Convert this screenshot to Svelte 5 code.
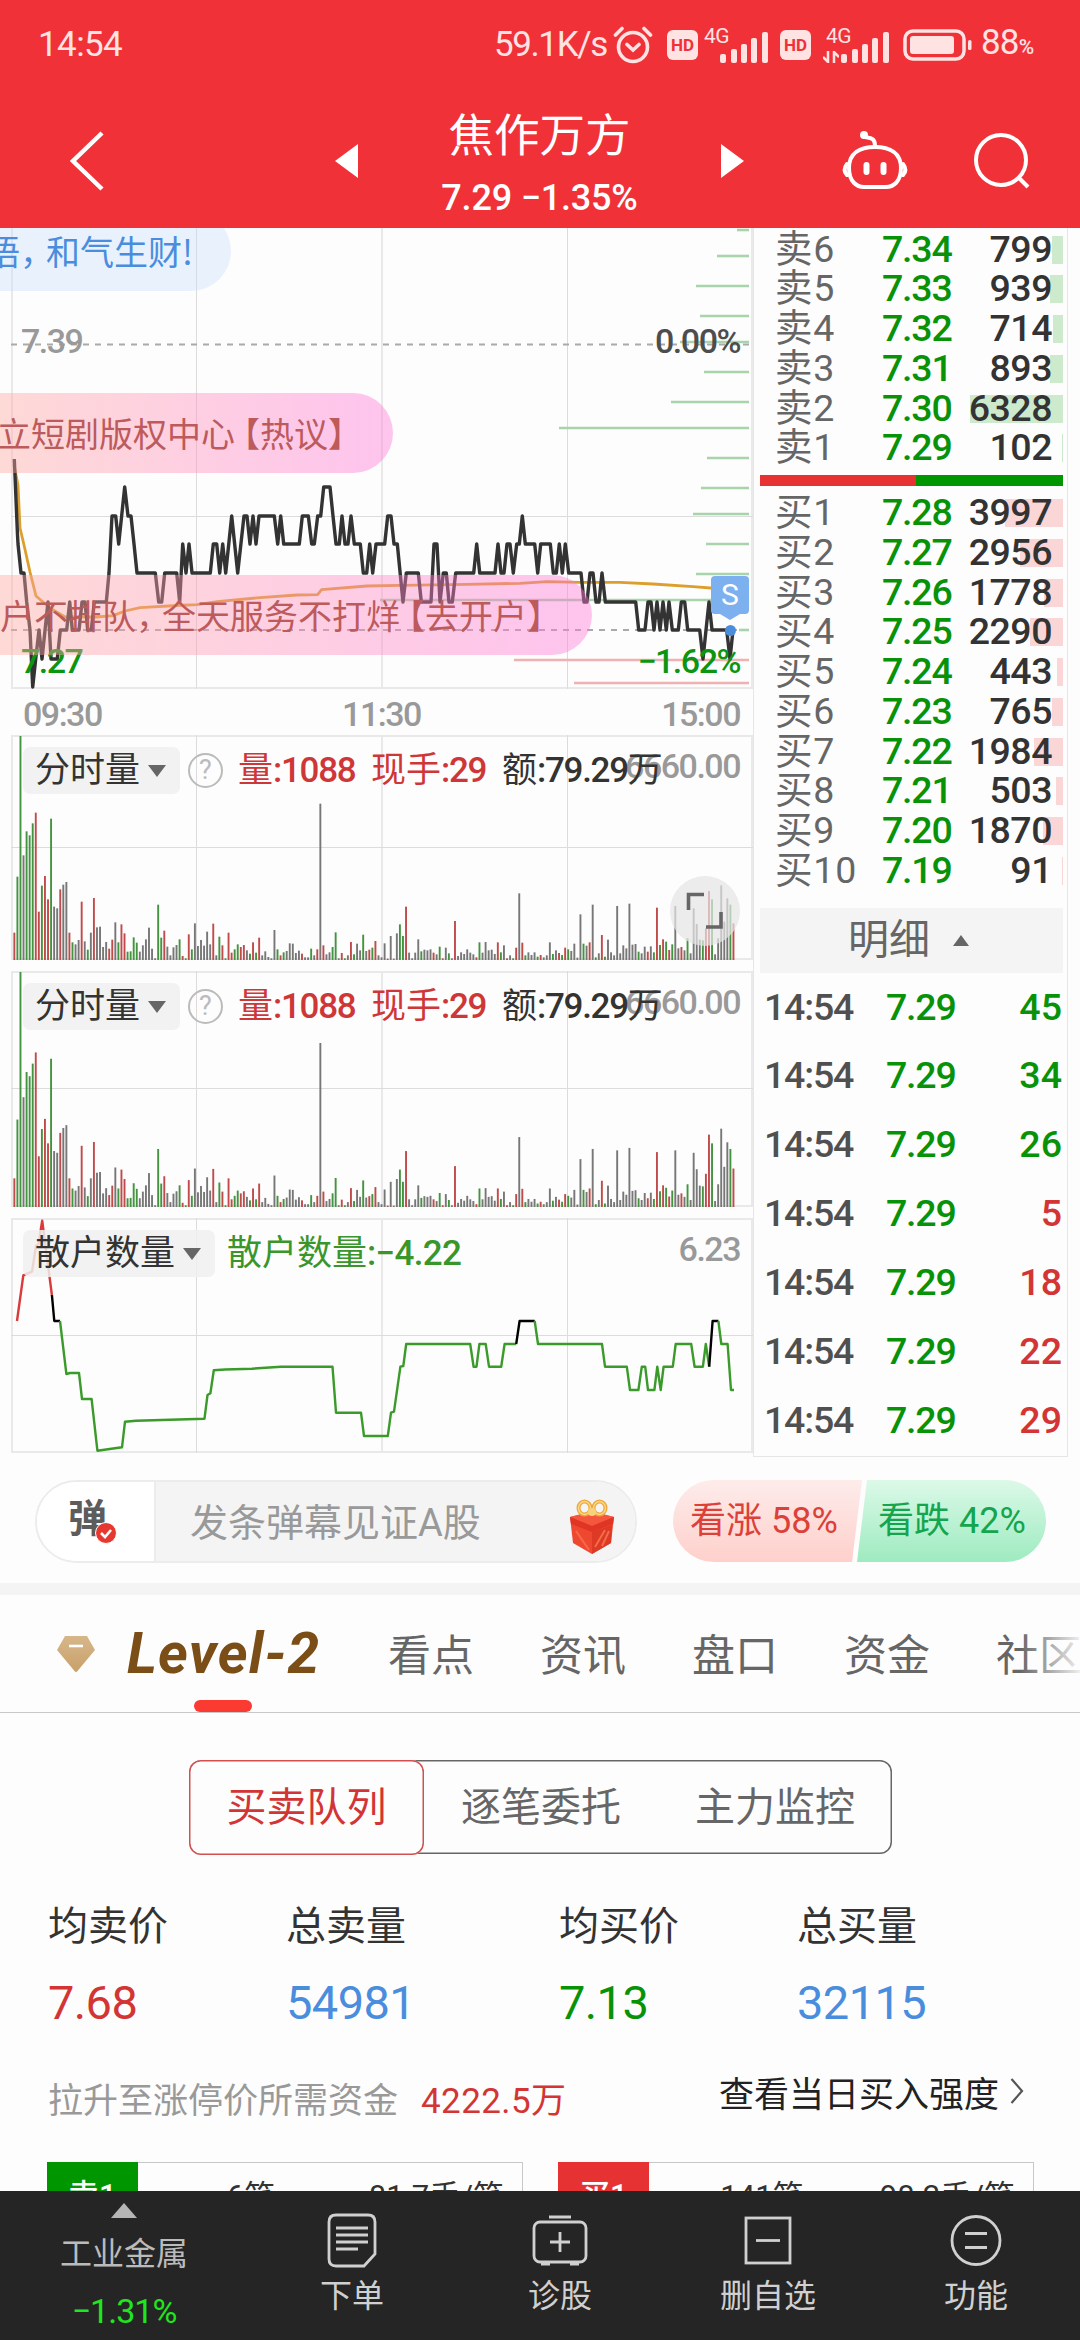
<script>
  const asks = [
    ['卖6', '7.34', 799, 11], ['卖5', '7.33', 939, 13], ['卖4', '7.32', 714, 10],
    ['卖3', '7.31', 893, 13], ['卖2', '7.30', 6328, 93], ['卖1', '7.29', 102, 1]
  ];
  const bids = [
    ['买1', '7.28', 3997, 58], ['买2', '7.27', 2956, 43], ['买3', '7.26', 1778, 19],
    ['买4', '7.25', 2290, 33], ['买5', '7.24', 443, 6], ['买6', '7.23', 765, 11],
    ['买7', '7.22', 1984, 29], ['买8', '7.21', 503, 7], ['买9', '7.20', 1870, 20], ['买10', '7.19', 91, 1]
  ];
  const ticks = [[45, 'g'], [34, 'g'], [26, 'g'], [5, 'r'], [18, 'r'], [22, 'r'], [29, 'r']];

  // Price trace in thirds of a pixel: x, then price level (0 = 7.34, each step is one cent down)
  const levels = [487, 516, 544, 573, 602, 630, 659, 687];
  const trace = '45,2 54,2 63,3 72,3 80,4 90,5 98,7 107,6 117,5 126,6 144,4 153,6 172,6 181,5 200,5 209,4 217,5 237,5 246,4 255,4 263,5 274,5 283,4 319,4 327,3 336,1 347,1 356,2 374,0 384,1 393,1 402,2 411,3 466,3 476,4 485,4 494,3 530,3 539,4 548,2 558,3 567,2 576,3 631,3 640,2 650,2 659,3 668,2 677,3 695,1 713,3 732,1 741,1 750,2 759,1 768,2 777,1 823,1 833,2 842,1 851,2 898,2 907,1 925,1 935,2 943,2 953,1 962,1 971,0 990,0 999,1 1008,2 1018,2 1026,1 1035,2 1044,2 1053,1 1063,2 1081,2 1090,3 1100,3 1109,2 1118,3 1128,2 1154,2 1163,1 1173,1 1182,2 1192,2 1209,4 1219,3 1255,3 1264,4 1293,4 1302,2 1311,2 1320,4 1330,3 1339,3 1347,4 1357,4 1367,3 1421,3 1430,2 1439,3 1485,3 1494,2 1503,3 1512,3 1521,2 1530,2 1540,3 1550,2 1558,2 1567,1 1576,2 1604,2 1613,3 1622,2 1651,2 1660,3 1669,3 1678,2 1687,3 1696,2 1706,3 1743,3 1752,4 1761,4 1770,3 1779,3 1788,4 1797,4 1806,3 1816,4 1907,4 1916,5 1935,5 1944,4 1953,4 1962,5 1971,4 1980,5 1989,4 1999,5 2007,4 2017,5 2035,5 2044,4 2054,4 2063,5 2099,5 2109,6 2118,5 2127,4 2136,5 2180,5 2190,6 2199,5';
  const pricePoints = '14.3,459 17.5,535 ' + trace.split(' ').slice(1).map((p) => {
    const [x, l] = p.split(',').map(Number);
    return `${(x / 3).toFixed(1)},${levels[l]}`;
  }).join(' ');
  const avgPoints = '14,465 18,485 20,528 24,545 30,572 36,596 50,608 65,617 97,617 113,615.6 125,611 140,607.6 177,605.5 197,604.6 217,601.6 260,597.6 297,595 317.6,594.6 321.6,589.6 367,586 400,585.3 467,584.3 520,583.3 547,581.6 580,582.3 620,582.3 653,584 693,586.6 717,588.5 733,590';

  const askDepth = [[230, 737], [256, 717], [286, 696], [316, 700], [342, 680], [372, 704], [402, 671], [428, 559], [458, 707], [488, 701], [514, 693], [544, 706], [574, 696], [600, 380], [630, 739]];
  const bidDepth = [[660, 514], [683, 574]];

  // One bar per minute: colour letter and height
  const volume = 'r82 g250 g672 k314 g386 g374 g410 r442 r145 g223 r252 r182 g424 k160 k155 r212 k226 k234 r82 g53 k47 k60 r175 k56 g31 k82 r186 k98 k100 k39 k54 r34 r61 k113 g53 r107 r80 g25 g26 g68 g52 k25 k44 k62 k97 k34 k5 g166 g67 r88 k40 k14 k38 k45 g62 r12 g5 r77 g32 k110 k42 k60 k43 k85 k47 r109 k14 g70 r44 g5 r82 r22 g32 g47 r39 r45 k29 g19 r53 g22 r67 k14 k26 k9 k5 k90 g32 r14 g23 k27 k50 k49 k21 k28 r19 k8 k8 g34 k14 r32 k469 r44 k17 k23 g39 g83 k5 r21 g5 k14 r54 g17 k49 k29 g76 k27 r31 g37 r57 k14 k8 k50 r4 k72 k4 k80 g107 g72 r160 k22 k5 k22 k62 g26 k31 k29 k32 r22 k17 g40 r5 k37 g20 k5 r117 k12 k23 k18 k32 k22 k17 r8 g53 k22 k54 k29 k31 k18 r53 g23 k44 r5 k14 g5 r37 k200 r52 g14 k23 k15 k23 g10 r15 k8 k14 k53 g18 k29 r21 g15 r37 g32 k27 k49 k7 k137 g49 k43 r53 k166 g8 k20 r75 g10 k61 k23 k14 k162 k20 k44 k35 k169 k46 k48 g25 k20 k40 r25 k41 g23 r157 g45 r62 g55 r30 g47 k162 k35 r39 k29 g65 k20 k155 k108 k61 g59 r95 r207 g182 k17 k65 k224 k115 k185 g166 r110';
  const bars = volume.split(' ').map((t, i) => ({ c: t[0], x: 13.4 + i * 3.06, h: Number(t.slice(1)) / 672 }));

  const volPanels = [{ h: 226, mid: 112, plot: 224, button: true }, { h: 237, mid: 117, plot: 235, button: false }];
  const retail = [
    ['#d93a3a', '17,103 23.3,57.3 32,53.7 36,28 38.5,26 42.2,2.7 51.9,77'],
    ['#000', '51.9,77 54.3,103 60,103'],
    ['#3a9a2a', '60,103 66.4,156 70,155 79,155 82,181 91.6,181 97.4,232.7 122,229.3 125,203.7 136,202.7 204.5,200.7 207.5,177 210.4,175.3 213.8,152.3 225,151.5 252,150.7 281,148.7 332.5,148.7 336,194.7 361,194.7 364,218 387.8,218 391,194.7 394,193.7 400.4,148.7 403.3,148 406.2,126 470.2,126 473.6,148.7 476.5,148.7 479.4,126 485.7,126 489,148.7 501.2,148.7 504.6,126 516.2,126'],
    ['#000', '516.2,126 519.6,103 534.7,103'],
    ['#3a9a2a', '534.7,103 538,126 602,126 605,148.7 626.8,148.7 630,172 638.4,172 641.8,148.7 645.2,148.7 648,172 654.4,172 657.3,148.7 660.7,172 663.6,148.7 672.8,148.7 675.7,126 691.2,126 694.6,148.7 702.9,148.7 705.8,126 709.2,148.7'],
    ['#000', '709.2,148.7 712.6,103 718.4,103'],
    ['#3a9a2a', '718.4,103 721.3,126 727.6,126 731,172 734,172']
  ];
  const stats = [['均卖价', '7.68', 'rise'], ['总卖量', '54981', 'total'], ['均买价', '7.13', 'fall'], ['总买量', '32115', 'total']];
</script>

{#snippet grid(h, mid)}
  <g fill="none" stroke="#e9e9e9" stroke-width="2">
    <path d="M12 0V{h}M382 0V{h}M752 0V{h}" />
    <path d="M11 {h - 1}H753" />
    <path stroke="#dcdcdc" stroke-width="1" d="M196.5 0V{h}M567.5 0V{h}M11 {mid + 0.5}H753" />
  </g>
{/snippet}

{#snippet signal()}
  <svg class="signal" viewBox="0 0 48 31" width="48" height="31" fill="#ffe3e3">
    <rect x="0" y="22" width="6" height="9" rx="2" /><rect x="11" y="17" width="6" height="14" rx="2" />
    <rect x="21" y="12" width="6" height="19" rx="2" /><rect x="31" y="6" width="6" height="25" rx="2" />
    <rect x="42" y="0" width="6" height="31" rx="2" />
  </svg>
{/snippet}

<div class="screen">
  <header>
    <div class="status">
      <span class="clock">14:54</span>
      <span class="speed">59.1K/s</span>
      <svg class="alarm" viewBox="0 0 40 38" width="40" height="38" fill="none" stroke="#ffe3e3" stroke-width="3.6" stroke-linecap="round">
        <circle cx="20" cy="21" r="14.5" /><path d="M2.5 9L9 2.5M37.5 9L31 2.5M14 18.5L20 24L26 18.5" />
      </svg>
      <span class="hd">HD</span>
      <span class="net"><i>4G</i>{@render signal()}</span>
      <span class="hd second">HD</span>
      <span class="net wide"><i>4G</i>
        <svg class="updown" viewBox="0 0 16 12" width="16" height="12" fill="none" stroke="#ffe3e3" stroke-width="2.5"><path d="M5 0V11L0 6M11 12V1L16 6" /></svg>
        {@render signal()}</span>
      <svg class="battery" viewBox="0 0 70 32" width="70" height="32">
        <rect x="2" y="2" width="59" height="28" rx="8" fill="none" stroke="#ffe3e3" stroke-width="3.5" />
        <rect x="7" y="7" width="44" height="18" rx="3" fill="#ffe3e3" /><rect x="65" y="11" width="3.5" height="10" rx="1.5" fill="#ffe3e3" />
      </svg>
      <span class="level">88<small>%</small></span>
    </div>
    <div class="nav">
      <svg class="back" viewBox="0 0 36 60" width="36" height="60" fill="none" stroke="#fff" stroke-width="4.5"><path d="M33 2L4 30L33 58" /></svg>
      <svg class="prev" viewBox="0 0 23 34" width="23" height="34" fill="#fff"><path d="M23 0V34L0 17z" /></svg>
      <div class="title"><h1>焦作万方</h1><p>7.29 −1.35%</p></div>
      <svg class="next" viewBox="0 0 23 34" width="23" height="34" fill="#fff"><path d="M0 0V34L23 17z" /></svg>
      <svg class="bot" viewBox="0 0 66 62" width="66" height="62" fill="none" stroke="#fff" stroke-width="4" stroke-linecap="round">
        <path d="M33 17C18 17 7 23 7 38C7 52 15 57 22 57H44C51 57 59 52 59 38C59 23 48 17 33 17z" />
        <path d="M33 16C33 8 29 8 23 7M5 34C2 38 2 42 5 45M61 34C64 38 64 42 61 45" /><circle cx="22" cy="5" r="2" fill="#fff" />
        <path stroke-width="6" d="M24.5 35V42M41.5 35V42" />
      </svg>
      <svg class="search" viewBox="0 0 58 58" width="58" height="58" fill="none" stroke="#fff" stroke-width="4"><circle cx="28" cy="28" r="25" /><path d="M45 45L55 55" /></svg>
    </div>
  </header>

  <section class="market">
    <div class="charts">
      <div class="price">
        <svg viewBox="0 228 753 462" width="753" height="462" fill="none">
          <g stroke="#e9e9e9" stroke-width="2"><path d="M12 228V689M382 228V689M752 228V689M11 688H753" />
            <path stroke="#dcdcdc" stroke-width="1" d="M196.5 228V689M567.5 228V689M11 516.5H753" /></g>
          <path stroke="#aaa" stroke-width="2" stroke-dasharray="6 6" d="M11 344.5H749M11 630H749" />
          <g stroke="#a9d3ab" stroke-width="2.6">{#each askDepth as [y, x]}<path d="M{x} {y}H749" />{/each}</g>
          <g stroke="#efb1b1" stroke-width="2.6">{#each bidDepth as [y, x]}<path d="M{x} {y}H749" />{/each}</g>
          <polyline points={avgPoints} stroke="#dc9f2c" stroke-width="2.8" stroke-linejoin="round" />
          <polyline points={pricePoints} stroke="#333" stroke-width="3.4" stroke-linejoin="round" />
        </svg>
        <span class="num hi">7.39</span><span class="num zero">0.00%</span>
        <span class="num lo">7.27</span><span class="num chg">−1.62%</span>
        <span class="pill note">语<b>，</b>和气生财!</span>
        <span class="pill hot">立短剧版权中心<em>【</em>热议】</span>
        <span class="pill open">户不排队<b>，</b>全天服务不打烊<em>【</em>去开户】</span>
        <span class="sell">S</span><span class="dot"></span>
      </div>
      <div class="times num"><span>09:30</span><span>11:30</span><span>15:00</span></div>

      {#each volPanels as p}
        <div class="panel vol">
          <svg viewBox="0 0 753 {p.h}" width="753" height={p.h}>
            <path d="M11 1H753" stroke="#e9e9e9" stroke-width="2" />
            {@render grid(p.h - 1, p.mid)}
            {#each bars as b}<rect class={b.c} x={b.x} y={p.h - 1 - b.h * p.plot} width="1.9" height={b.h * p.plot} />{/each}
          </svg>
          <span class="num max">6660.00</span>
          <div class="legend">
            <span class="pick">分时量<i></i></span><span class="help">?</span>
            <span class="rd vq">量<b>:1088</b></span><span class="rd vh">现手<b>:29</b></span><span>额<b>:79.29</b>万</span>
          </div>
          {#if p.button}
            <span class="expand"><svg viewBox="0 0 38 38" width="38" height="38" fill="none" stroke="#666" stroke-width="3.6"><path d="M2.5 18V2.5H18M35 20V35H20" /></svg></span>
          {/if}
        </div>
      {/each}

      <div class="panel retail">
        <svg viewBox="0 0 753 235" width="753" height="235" fill="none">
          <path d="M11 1H753" stroke="#e9e9e9" stroke-width="2" />
          {@render grid(235, 117)}
          {#each retail as [c, pts]}<polyline points={pts} stroke={c} stroke-width="2.4" stroke-linejoin="round" />{/each}
        </svg>
        <div class="legend">
          <span class="pick">散户数量<i></i></span><span class="gn">散户数量<b>:−4.22</b></span>
        </div>
        <span class="num max">6.23</span>
      </div>
    </div>

    <div class="book">
      <div class="rows asks">
        {#each asks as [n, p, v, w]}<div class="row"><i class="up" style:width="{w}px"></i><span>{n}</span><b>{p}</b><strong>{v}</strong></div>{/each}
      </div>
      <div class="ratio"><i></i></div>
      <div class="rows bids">
        {#each bids as [n, p, v, w]}<div class="row"><i style:width="{w}px"></i><span>{n}</span><b>{p}</b><strong>{v}</strong></div>{/each}
      </div>
      <div class="detail">明细<i></i></div>
      {#each ticks as [v, c]}<div class="tick"><span>14:54</span><b>7.29</b><strong class={c}>{v}</strong></div>{/each}
    </div>
  </section>

  <section class="chat">
    <div class="input">
      <div class="toggle"><span>弹</span><svg viewBox="0 0 22 22" width="22" height="22"><circle cx="11" cy="11" r="10.5" fill="#e5392f" stroke="#fff" /><path d="M6 11L10 15L16 8" fill="none" stroke="#fff" stroke-width="2.6" /></svg></div>
      <div class="field"><span>发条弹幕见证A股</span>
        <svg viewBox="0 0 46 56" width="46" height="56">
          <path d="M1 18L23 13L45 18L42 44L23 55L4 44z" fill="#ee4930" /><path d="M1 18L23 12L45 18L23 27z" fill="#f4573e" />
          <path d="M1 18L23 27V33L2 25zM45 18L23 27V33L44 25z" fill="#e03524" />
          <path d="M23 33L43 26L42 44L23 55z" fill="#dc3a25" /><path d="M26 48L36 31M33 47L40 32M20 51L7 32" stroke="#f8694a" stroke-width="2" />
          <g fill="none" stroke="#eda63c" stroke-width="4"><ellipse cx="15.500" cy="9" rx="6" ry="6.500" /><ellipse cx="30.500" cy="9" rx="6" ry="6.500" /></g>
          <g fill="none" stroke="#fbd883" stroke-width="1.500"><ellipse cx="15.500" cy="9" rx="6" ry="6.500" /><ellipse cx="30.500" cy="9" rx="6" ry="6.500" /></g>
          <circle cx="23" cy="13" r="4" fill="#f7d27a" />
        </svg>
      </div>
    </div>
    <div class="vote"><span class="bull">看涨 58%</span><span class="bear">看跌 42%</span></div>
  </section>

  <nav class="tabs">
    <svg viewBox="0 0 38 36" width="38" height="36"><defs><linearGradient id="gem" x2="0" y2="1"><stop stop-color="#d6b78a" /><stop offset="1" stop-color="#c9a069" /></linearGradient></defs>
      <path d="M8 0H30L38 14L20.5 35Q19 37 17.5 35L0 14z" fill="url(#gem)" /><path d="M12 10H26" stroke="#fff" stroke-width="2.6" /></svg>
    <span class="lv">Level-2</span><span>看点</span><span>资讯</span><span>盘口</span><span>资金</span><span>社区</span>
    <i class="mark"></i><i class="fade"></i>
  </nav>

  <div class="segment"><span class="on">买卖队列</span><span>逐笔委托</span><span>主力监控</span></div>

  <div class="stats">{#each stats as [k, v, c]}<div><span>{k}</span><b class={c}>{v}</b></div>{/each}</div>

  <div class="funds"><span>拉升至涨停价所需资金</span><b>4222.5万</b>
    <a href="#strength">查看当日买入强度<svg viewBox="0 0 14 26" width="14" height="26" fill="none" stroke="#555" stroke-width="2.2"><path d="M1.5 1L12 13L1.5 25" /></svg></a></div>

  <div class="queues">
    <div class="queue"><b>卖1</b><span>6笔</span><span class="each">81.7手/笔</span></div>
    <div class="queue buy"><b>买1</b><span>141笔</span><span class="each">98.2手/笔</span></div>
  </div>

  <footer>
    <div class="sector"><i></i><span>工业金属</span><b>−1.31%</b></div>
    <div class="item"><svg viewBox="0 0 56 56" width="56" height="56"><path d="M12 3H44Q51 3 51 10V42L40 54H12Q5 54 5 47V10Q5 3 12 3z" /><path d="M12 16H44M12 23H44M12 30H44M12 37H34" /></svg>下单</div>
    <div class="item"><svg viewBox="0 0 56 56" width="56" height="56"><rect x="2" y="10" width="52" height="40" rx="6" /><path d="M17 5H39M28 20V40M18 30H38M9 52H18M38 52H47" /></svg>诊股</div>
    <div class="item"><svg viewBox="0 0 56 56" width="56" height="56"><rect x="6" y="6" width="44" height="45" /><path d="M16 28.5H40" /></svg>删自选</div>
    <div class="item"><svg viewBox="0 0 56 56" width="56" height="56"><circle cx="28" cy="28.5" r="24" /><path d="M17 21.5H39M17 35.5H39" /></svg>功能</div>
  </footer>
</div>

<style>
  :global(body) { background: #fff; }
  .screen { width: 1080px; height: 2340px; overflow: hidden; display: flex; flex-direction: column; background: #fdfdfd; font-family: Roboto, "Noto Sans CJK SC", sans-serif; color: #333; }
  .screen * { box-sizing: border-box; }
  svg { display: block; flex: none; }
  i, em { font-style: normal; }
  h1, p { margin: 0; font-weight: 400; }

  header { height: 228px; flex: none; background: #f03138; color: #fff; }
  .status { height: 90px; padding-left: 38px; display: flex; align-items: center; color: #ffe3e3; font-size: 35px; line-height: 90px; }
  .clock { width: 456px; letter-spacing: -.6px; }
  .speed { width: 120px; letter-spacing: -1.4px; }
  .alarm { margin-right: 14px; margin-left: -1px; }
  .hd { width: 31px; height: 30px; border-radius: 6px; background: #ffe3e3; color: #f03138; font: 700 17px/31px Roboto; text-align: center; }
  .net { display: grid; width: 64px; height: 36px; margin: 0 12px 0 6px; grid-template-columns: 16px 48px; align-items: end; }
  .net > * { grid-row: 1; }
  .net i { grid-column: 1 / 3; align-self: start; font-size: 21px; line-height: 18px; letter-spacing: -.5px; }
  .net .signal { grid-column: 2; }
  .net.wide { width: 66px; margin: 0 14px 0 12px; grid-template-columns: 18px 48px; }
  .wide i { padding-left: 3px; }
  .updown { grid-column: 1; }
  .battery { margin-right: 8px; }
  .level { letter-spacing: -.8px; }
  small { font-size: 21px; font-weight: 500; }

  .nav { height: 138px; display: flex; align-items: center; }
  .nav > svg { margin-top: 3px; }
  .back { margin-left: 69px; margin-right: 230px; }
  .title { width: 363px; text-align: center; align-self: flex-start; padding-top: 18px; }
  h1 { font-size: 45.5px; line-height: 58px; }
  p { font-size: 36px; line-height: 36px; font-weight: 500; margin-top: 14px; letter-spacing: -.2px; }
  .next { margin-right: 98px; }
  .bot { margin-right: 65px; }

  .market { display: flex; height: 1229px; flex: none; }
  .charts { width: 753px; flex: none; }
  .num { font-weight: 500; font-size: 34px; line-height: 36px; letter-spacing: -1.5px; color: #999; }
  .price { position: relative; height: 462px; overflow: hidden; }
  .price > span { position: absolute; white-space: nowrap; }
  .hi { left: 21px; top: 95px; }
  .zero { right: 13px; top: 95px; color: #4d4d4d; }
  .price .lo { left: 21px; top: 415px; color: #0b9510; }
  .price .chg { right: 13px; top: 415px; color: #0b9510; }
  .pill { height: 80px; line-height: 80px; font-size: 34px; font-family: "Noto Sans CJK SC", sans-serif; border-radius: 0 40px 40px 0; left: 0; }
  .pill b { font-weight: 400; margin-right: -8px; }
  .pill em { margin-left: -9px; }
  .note { top: -17px; width: 231px; text-indent: -14px; color: #4a8ddd; background: rgba(195, 219, 255, .33); }
  .hot, .open { color: #bc5a5c; background: linear-gradient(90deg, rgba(255, 168, 160, .42) 0, rgba(255, 119, 214, .42) 95%); }
  .hot { top: 165px; width: 393px; text-indent: -3px; }
  .open { top: 347px; width: 592px; }
  .sell { left: 711px; top: 348px; width: 38px; height: 38px; border-radius: 4px; background: #7db0ef; color: #fff; font-size: 30px; line-height: 38px; text-align: center; }
  .sell::after { content: ""; position: absolute; left: 9px; top: 38px; border: 10px solid transparent; border-top: 6px solid #7db0ef; border-bottom: 0; }
  .dot { left: 725px; top: 397px; width: 11px; height: 11px; border-radius: 50%; background: #4a8ddd; }
  .times { height: 45px; display: flex; justify-content: space-between; padding: 6px 13px 0 23px; line-height: 36px; }

  .panel { display: grid; margin-bottom: 10px; }
  .panel > * { grid-area: 1 / 1; }
  .legend { display: flex; height: 47px; margin-top: 12px; padding-left: 23px; align-items: center; font-size: 35px; line-height: 47px; white-space: nowrap; }
  .legend b { font-weight: 500; letter-spacing: -1.3px; }
  .pick { display: flex; align-items: center; justify-content: space-between; width: 157px; padding: 0 14px 0 12px; height: 47px; border-radius: 7px; background: rgba(240, 240, 240, .85); }
  .pick i { border: 9px solid transparent; border-top: 12px solid #666; border-bottom: 0; }
  .help { width: 35px; height: 35px; margin: 0 15px 0 8px; border: 2.5px solid #bbb; border-radius: 50%; color: #bbb; font-size: 27px; line-height: 31px; text-align: center; }
  .rd { color: #cf3637; }
  .vq { width: 133px; }
  .vh { width: 131px; }
  .retail .pick { width: 192px; margin-right: 12px; }
  .gn { color: #3a962b; }
  .gn b { letter-spacing: -.7px; }
  .max { justify-self: end; margin: 13px 13px 0 0; }
  .expand { justify-self: end; margin: 141px 13px 0 0; width: 70px; height: 70px; border-radius: 50%; background: rgba(229, 229, 229, .72); display: grid; place-items: center; }
  rect.r { fill: #c14a4a; } rect.g { fill: #43933f; } rect.k { fill: #777; }

  .book { width: 315px; border: 1px solid #e6e6e6; border-top: 0; padding: 0 4px 0 6px; font-size: 37.5px; }
  .row { display: flex; position: relative; height: 39.75px; line-height: 39.75px; align-items: center; }
  .rows { padding-left: 15px; }
  .asks { padding-top: 1.5px; }
  .row span { width: 107px; color: #666; font-size: 37.5px; letter-spacing: .8px; }
  .row b, .tick b { width: 80px; color: #089208; font-weight: 500; letter-spacing: -1.2px; }
  .row strong { flex: 1; text-align: right; padding-right: 11px; font-weight: 500; position: relative; letter-spacing: -.5px; }
  .row i { position: absolute; right: 0; top: 6px; height: 28px; background: #fad6d6; }
  .row i.up { background: #cdeacd; }
  .ratio { height: 11px; margin: 7px 0; background: #009600; }
  .ratio i { display: block; width: 156px; height: 11px; background: #e63232; }
  .detail { height: 65px; margin: 17px 0 0; background: #f4f4f4; color: #666; font-size: 41px; line-height: 68px; display: flex; align-items: center; padding-left: 88px; gap: 23px; }
  .detail i { border: 8px solid transparent; border-top: 0; border-bottom: 11px solid #666; }
  .tick { display: flex; height: 68.9px; line-height: 68.9px; padding: 0 1px 0 4px; font-weight: 500; color: #505050; }
  .tick span { width: 122px; letter-spacing: -1.2px; }
  .tick strong { flex: 1; text-align: right; font-weight: 500; }
  .g { color: #089208; } .r { color: #d33535; }

  .chat { display: flex; padding: 23px 0 0 35px; height: 126px; flex: none; }
  .input { display: flex; width: 602px; height: 83px; border: 2px solid #ececec; border-radius: 42px; overflow: hidden; margin-right: 36px; }
  .toggle { width: 117px; background: #fff; display: grid; grid-template-columns: 60px; padding-left: 31px; align-items: center; }
  .toggle > * { grid-area: 1 / 1; }
  .toggle span { font-size: 39px; font-weight: 700; color: #5c5c5c; line-height: 70px; margin-top: -6px; }
  .toggle svg { margin: 22px 0 0 27px; }
  .field { flex: 1; display: flex; align-items: center; justify-content: space-between; padding: 0 20px 0 34px; background: #f4f4f4; border-left: 2px solid #ececec; color: #999; font-size: 38px; }
  .field span { margin-top: -5px; }
  .field svg { margin-top: 10px; }
  .vote { display: flex; height: 82px; line-height: 83px; font-size: 36px; width: 373px; border-radius: 41px; overflow: hidden; }
  .vote span { white-space: nowrap; }
  .bull { width: 189px; padding-left: 17px; color: #dc4038; background: linear-gradient(#fdeceb, #fed0cb); clip-path: polygon(0 0, 100% 0, 179px 100%, 0 100%); }
  .bear { width: 189px; margin-left: -5px; padding-left: 21px; color: #14a54e; background: linear-gradient(#dcf9e8, #9eebc0); clip-path: polygon(10px 0, 100% 0, 100% 100%, 0 100%); }

  .tabs { position: relative; height: 130px; flex: none; border-top: 12px solid #f4f4f4; border-bottom: 1.5px solid #c8c8c8; display: flex; align-items: center; padding: 0 0 0 57px; font-size: 43px; color: #666; white-space: nowrap; }
  .tabs span { margin: -4px 66px 0 0; }
  .tabs svg { margin-right: 32px; }
  .tabs .lv { width: 197px; margin: 0 64px 0 0; flex: none; color: #7a4e16; font: italic 700 57px/80px Roboto; letter-spacing: 1.2px; }
  .mark { position: absolute; left: 194px; bottom: 0; width: 58px; height: 12px; border-radius: 6px; background: #fb3b32; }
  .fade { position: absolute; right: 0; top: 20px; width: 60px; height: 80px; background: linear-gradient(90deg, rgba(253, 253, 253, 0), rgba(253, 253, 253, .9)); }

  .segment { display: grid; grid-template-columns: 235px 1fr 1fr; width: 703px; height: 94px; margin: 47px 0 0 189px; flex: none; border-radius: 12px; box-shadow: inset 0 0 0 1.5px #666; color: #666; font-size: 40px; line-height: 95px; text-align: center; }
  .on { color: #d23535; border-radius: 12px; box-shadow: inset 0 0 0 1.5px #d25050; background: #fdfdfd; }

  .stats { display: grid; grid-template-columns: 238px 273px 238px 1fr; padding-left: 48px; margin-top: 43px; flex: none; font-size: 40px; }
  .stats span, .stats b { display: block; font-weight: 400; line-height: 60px; }
  .stats b { font-size: 47px; margin-top: 16px; letter-spacing: -.6px; }
  .rise { color: #d33535; } .total { color: #4a8ddd; } .fall { color: #089208; }
  .funds { display: flex; align-items: center; height: 60px; margin: 34px 0 0 48px; font-size: 35px; color: #999; flex: none; }
  .funds b { font-weight: 400; color: #d33535; margin-left: 23px; letter-spacing: .4px; }
  .funds a { margin: -12px 56px 0 auto; color: #222; text-decoration: none; display: flex; align-items: center; gap: 11px; }
  .queues { display: flex; gap: 35px; margin: 35px 0 0 47px; height: 80px; flex: none; font-size: 31px; }
  .queue { width: 476px; height: 80px; border: 1.5px solid #c8c8c8; display: grid; grid-template-columns: 90px 226px 1fr; line-height: 68px; text-align: center; white-space: nowrap; }
  .queue b { background: #009600; color: #fff; font-weight: 500; margin: -1.5px 0 0 -1.5px; }
  .buy b { background: #e63232; }
  .queue .each { justify-self: end; padding-right: 18px; }

  footer { position: relative; margin-top: -51px; height: 149px; flex: none; display: grid; grid-template-columns: 248px repeat(4, 208px); background: #252525; color: #d0d0d0; font-size: 32px; text-align: center; }
  .sector { display: flex; flex-direction: column; align-items: center; line-height: 48px; color: #bbb; }
  .sector i { margin-top: 12px; border: 13px solid transparent; border-top: 0; border-bottom: 15px solid #b5b5b5; }
  .sector span { margin-top: 12px; }
  .sector b { font-weight: 400; color: #20e620; font-size: 34px; margin-top: 9px; letter-spacing: -1px; }
  .item { display: flex; flex-direction: column; align-items: center; padding-top: 21px; line-height: 48px; gap: 4px; }
  .item svg { fill: none; stroke: #d0d0d0; stroke-width: 2.8; }
</style>
